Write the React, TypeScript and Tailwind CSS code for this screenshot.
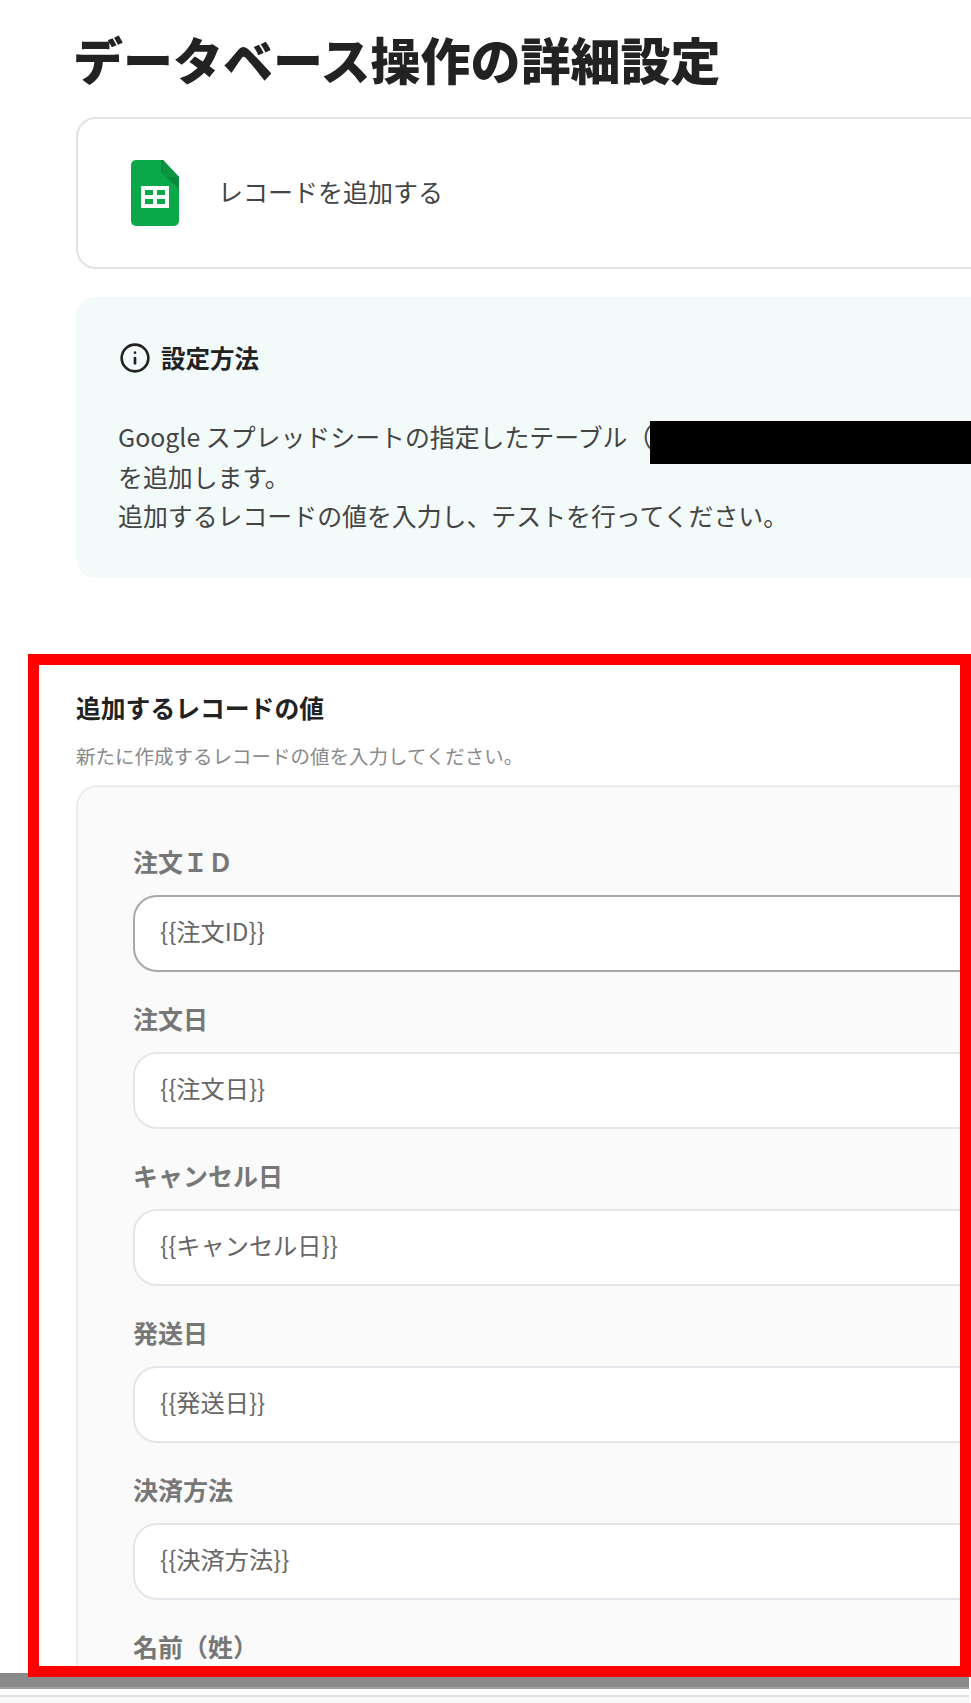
import React from "react";
import { Info } from "lucide-react";

const fields = [
  { label: "注文ＩＤ", value: "{{注文ID}}", active: true },
  { label: "注文日", value: "{{注文日}}" },
  { label: "キャンセル日", value: "{{キャンセル日}}" },
  { label: "発送日", value: "{{発送日}}" },
  { label: "決済方法", value: "{{決済方法}}" },
];

const SheetsIcon = () => (
  <svg viewBox="0 0 48 66" className="w-12 h-[66px] shrink-0">
    <path
      d="M5 0H32L48 17V61a5 5 0 0 1-5 5H5a5 5 0 0 1-5-5V5a5 5 0 0 1 5-5Z"
      fill="#0BA84A"
    />
    <path d="M32 0L48 17V29L30 12V0Z" fill="#0A8A3C" />
    <path d="M32 0L48 17H36a4 4 0 0 1-4-4Z" fill="#0BA84A" opacity="0.35" />
    <path
      d="M10 26H38V48H10ZM14 30V35H22V30ZM26 30V35H34V30ZM14 39V44H22V39ZM26 39V44H34V39Z"
      fill="#fff"
      fillRule="evenodd"
    />
  </svg>
);

const App = () => {
  return (
    <div className="relative w-[971px] h-[1703px] overflow-hidden bg-white font-['Noto_Sans_CJK_JP','Noto_Sans',sans-serif]">
      <h1 className="pl-[73px] pt-[22px] text-[50px] leading-[72px] font-black text-[#222] whitespace-nowrap">
        データベース操作の詳細設定
      </h1>

      <div className="ml-[76px] mt-[23px] w-[960px] h-[152px] flex items-center gap-[39px] pl-[53px] bg-white border-2 border-[#e2e2e2] rounded-[20px]">
        <SheetsIcon />
        <span className="pb-[2px] text-[25px] text-[#444] whitespace-nowrap">レコードを追加する</span>
      </div>

      <div className="relative ml-[76px] mt-[28px] w-[960px] h-[281px] pl-[42px] pt-[43px] bg-[#f3fafa] rounded-[20px]">
        <div className="flex items-center gap-[10px] h-[36px] text-[#222]">
          <Info className="w-[32px] h-[32px] ml-[1px]" strokeWidth={2} />
          <span className="text-[24.5px] font-bold whitespace-nowrap">設定方法</span>
        </div>
        <div className="mt-[41px] text-[24.9px] leading-[39.5px] text-[#444] whitespace-nowrap">
          <p>Google スプレッドシートの指定したテーブル（</p>
          <p>を追加します。</p>
          <p>追加するレコードの値を入力し、テストを行ってください。</p>
        </div>
        {/* redacted table name */}
        <div className="absolute left-[574px] top-[124px] w-[322px] h-[43px] bg-black" />
      </div>

      <section className="relative z-10 ml-[28px] mt-[76px] w-[943px] h-[1023px] overflow-hidden border-[11px] border-[#ff0000] bg-white">
        <h2 className="ml-[37px] mt-[24px] text-[24.8px] leading-[36px] font-bold text-[#222] whitespace-nowrap">
          追加するレコードの値
        </h2>
        <p className="ml-[37px] mt-[17px] text-[19.5px] leading-[28px] text-[#8a8a8a] whitespace-nowrap">
          新たに作成するレコードの値を入力してください。
        </p>
        <div className="ml-[37px] mt-[15px] w-[960px] pl-[55px] pt-[56px] pb-[40px] bg-[#fafafa] border-2 border-[#e9ecf0] rounded-[22px]">
          {fields.map((field) => (
            <div key={field.label} className="mb-[28px]">
              <div className="h-[36px] text-[25px] leading-[36px] font-bold text-[#777] whitespace-nowrap">
                {field.label}
              </div>
              <div
                className={`mt-[16px] h-[77px] flex items-center pl-[25px] pb-[4px] bg-white border-2 rounded-[24px] text-[24.2px] text-[#666] ${
                  field.active ? "border-[#a8a8a8]" : "border-[#e3e7ec]"
                }`}
              >
                {field.value}
              </div>
            </div>
          ))}
          <div className="h-[36px] text-[25px] leading-[36px] font-bold text-[#777] whitespace-nowrap">
            名前（姓）
          </div>
        </div>
      </section>

      {/* window bottom edge */}
      <div className="-mt-[4px] w-[969px] h-[16px] bg-[#8a8a8a] border-b-2 border-[#a0a0a0]" />
      <div className="mt-[6px] h-[2px] w-[969px] bg-[#e0e0e0]" />
      <div className="h-[6px] w-[969px] bg-[#f8f8f8]" />
    </div>
  );
};

export default App;
